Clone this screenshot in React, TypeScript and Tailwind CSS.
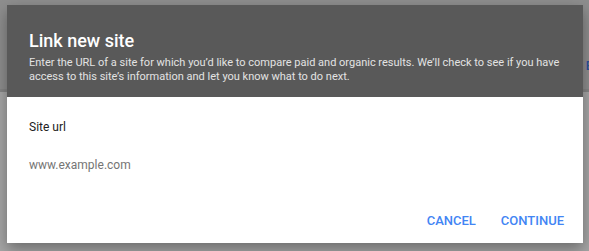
export default function App() {
  return (
    <div
      className="relative w-[589px] h-[251px] overflow-hidden bg-[#a3a3a3]"
      style={{ fontFamily: "Roboto, 'Liberation Sans', sans-serif" }}
    >
      {/* dimmed page behind the dialog */}
      <div className="flex flex-col h-full">
        <div className="h-[89px] bg-[#8e8e8e] flex justify-end items-center pt-[43px]">
          <span className="text-[13px] font-medium text-[#2a4f9a] -mr-[4px]">E</span>
        </div>
        <div className="h-[3px] bg-[#858585]" />
        <div className="flex-1 bg-[#a6a6a6]" />
      </div>

      {/* dialog */}
      <div className="absolute left-[7px] top-[5px] w-[576px] h-[238px] flex flex-col bg-white shadow-[0_6px_14px_rgba(0,0,0,0.35)]">
        <div className="h-[92px] bg-[#595959] px-[22px] pt-[24px]">
          <h1 className="text-[18px] leading-[24px] font-medium text-white">Link new site</h1>
          <p className="mt-[3px] text-[11px] leading-[14px] text-[#e3e3e3]">
            Enter the URL of a site for which you’d like to compare paid and organic results. We’ll check to see if you have access to this site’s information and let you know what to do next.
          </p>
        </div>
        <div className="flex-1 flex flex-col px-[22px] pt-[22px]">
          <div className="text-[12px] leading-[16px] text-[#212121]">Site url</div>
          <div className="mt-[22px] text-[12px] leading-[16px] text-[#757575]">www.example.com</div>
          <div className="mt-auto mb-[13px] -mr-[3px] flex justify-end gap-[25px]">
            <button className="text-[13px] font-medium text-[#4285f4]">CANCEL</button>
            <button className="text-[13px] font-medium text-[#4285f4]">CONTINUE</button>
          </div>
        </div>
      </div>
    </div>
  );
}
